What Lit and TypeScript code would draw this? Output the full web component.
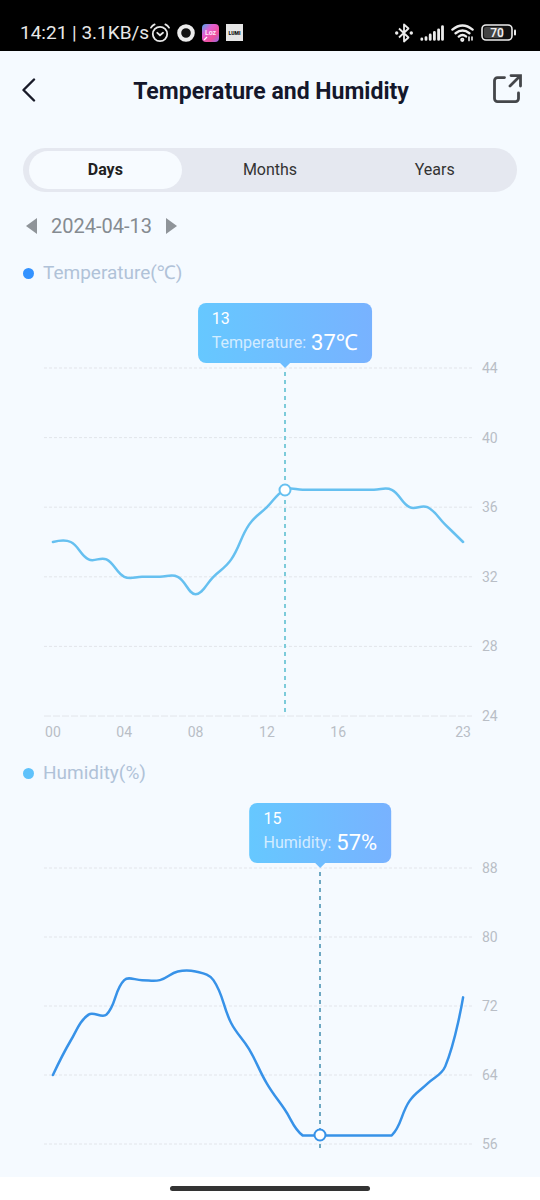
import { LitElement, html, svg, css } from "lit";
import { customElement, property, state } from "lit/decorators.js";
import { classMap } from "lit/directives/class-map.js";

const VIEW_W = 432;
const VIEW_H = 300;
const SLOT = VIEW_W / 24;

interface Pt { x: number; y: number }

/** Smooth cubic path; handles are weighted by segment length and never pass the floor. */
function smoothPath(pts: Pt[], floor: number): string {
  const k = 0.4;
  const cap = (y: number) => Math.min(y, floor);
  const len = (a: Pt, b: Pt) => Math.hypot(b.x - a.x, b.y - a.y);
  let d = `M${pts[0].x} ${pts[0].y}`;
  let out = pts[0];
  for (let i = 1; i < pts.length; i++) {
    const p = pts[i];
    const prev = pts[i - 1];
    const next = pts[i + 1];
    let into = p;
    let nextOut = p;
    if (next) {
      const ratio = len(p, next) / (len(p, next) + len(prev, p));
      const vx = next.x - prev.x;
      const vy = next.y - prev.y;
      into = { x: p.x - vx * k * (1 - ratio), y: cap(p.y - vy * k * (1 - ratio)) };
      nextOut = { x: p.x + vx * k * ratio, y: cap(p.y + vy * k * ratio) };
    }
    d += `C${out.x} ${out.y} ${into.x} ${into.y} ${p.x} ${p.y}`;
    out = nextOut;
  }
  return d;
}

@customElement("day-chart")
export class DayChart extends LitElement {
  @property() name = "";
  @property() unit = "";
  @property({ type: Array }) values: number[] = [];
  @property({ type: Array }) ticks: number[] = [];
  @property({ type: Array }) hours: string[] = [];
  @property({ type: Number }) selected = 0;

  static styles = css`
    :host { display: block; }
    .legend {
      display: flex; align-items: center; gap: 9px; margin: 0;
      font-size: 19px; line-height: 24px; font-weight: 400; color: #b0c2d8;
    }
    .dot { width: 11px; height: 11px; border-radius: 50%; background: var(--dot); }
    .chart {
      display: grid; grid-template-columns: 1fr 35px; column-gap: 10px;
      margin: 83px 0 0 21px;
    }
    .plot { position: relative; height: var(--plot-height); }
    .lines { display: block; width: 100%; height: 100%; overflow: visible; }
    .lines * { vector-effect: non-scaling-stroke; fill: none; }
    .grid { stroke: #e2e5ea; stroke-width: 1; stroke-dasharray: 3 2; }
    .base { stroke-dasharray: 7 2; }
    .curve { stroke: var(--line); stroke-width: 2.5; stroke-linecap: round; stroke-linejoin: round; }
    .guide {
      position: absolute; top: 0; bottom: var(--overhang); width: 2px; transform: translateX(-50%);
      background: repeating-linear-gradient(to bottom, transparent 0 4px, var(--guide) 4px 8px);
    }
    .marker {
      position: absolute; width: 9px; height: 9px; border: 2px solid var(--line);
      border-radius: 50%; background: #fff; transform: translate(-50%, -50%);
    }
    .tip {
      position: absolute; bottom: calc(100% + 5px); transform: translateX(-50%);
      box-sizing: border-box; height: 60px; padding: 5px 14px; border-radius: 8px;
      background: linear-gradient(90deg, #66c8ff, #78b2ff); color: #fff;
      font-size: 16px; line-height: 22px; white-space: nowrap;
    }
    .tip::after {
      content: ""; position: absolute; top: 100%; left: 50%; transform: translateX(-50%);
      border: 5px solid transparent; border-top-color: #6ebdff; border-bottom: 0;
    }
    .hour { display: block; }
    .reading { display: flex; align-items: center; gap: 5px; line-height: 26px; }
    .label { opacity: 0.7; }
    .value { font-size: 22px; }
    .y {
      display: flex; flex-direction: column; justify-content: space-between;
      margin: -8px 0; font-size: 14px; line-height: 16px; color: #b9bec6;
    }
    .x {
      display: grid; grid-template-columns: repeat(24, 1fr); padding-top: 8px;
      font-size: 14px; line-height: 16px; color: #b9bec6;
    }
    .x span { display: flex; justify-content: center; width: 100%; min-width: 0; }
  `;

  render() {
    const top = this.ticks[0];
    const bottom = this.ticks[this.ticks.length - 1];
    const y = (v: number) => ((top - v) / (top - bottom)) * VIEW_H;
    const pts = this.values.map((v, i) => ({ x: (i + 0.5) * SLOT, y: y(v) }));
    const left = ((this.selected + 0.5) / 24) * 100;
    const at = (y(this.values[this.selected]) / VIEW_H) * 100;
    return html`
      <h2 class="legend"><span class="dot"></span>${this.name}(${this.unit})</h2>
      <div class="chart">
        <div class="plot">
          <svg class="lines" viewBox="0 0 ${VIEW_W} ${VIEW_H}" preserveAspectRatio="none" role="img" aria-label=${this.name}>
            ${this.ticks.map((t) => svg`<path class=${t === bottom && this.hours.length ? "grid base" : "grid"} d="M0 ${y(t)}H${VIEW_W}" />`)}
            <path class="curve" d=${smoothPath(pts, y(Math.min(...this.values)))} />
          </svg>
          <div class="guide" style="left:${left}%"></div>
          <div class="marker" style="left:${left}%;top:${at}%"></div>
          <div class="tip" style="left:${left}%">
            <span class="hour">${this.selected}</span>
            <span class="reading"><span class="label">${this.name}:</span><span class="value">${this.values[this.selected]}${this.unit}</span></span>
          </div>
        </div>
        <div class="y">${this.ticks.map((t) => html`<span>${t}</span>`)}</div>
        ${this.hours.length
          ? html`<div class="x">${this.hours.map((t) => html`<span style="grid-column:${Number(t) + 1}">${t}</span>`)}</div>`
          : null}
      </div>
    `;
  }
}

@customElement("app-root")
export class AppRoot extends LitElement {
  @state() private range = "Days";

  static styles = css`
    :host {
      display: flex; flex-direction: column; min-height: 100vh;
      background: #f5faff; font-family: Roboto, "Noto Sans", sans-serif;
    }
    button { font: inherit; border: 0; padding: 0; background: none; color: inherit; cursor: pointer; }
    svg { display: block; }
    .status {
      display: flex; align-items: center; box-sizing: border-box; height: 51px;
      padding: 14px 23px 0 20px; background: #000; color: #e8e8e8; font-size: 19px; line-height: 24px;
    }
    .left, .right { display: flex; align-items: center; }
    .left { gap: 7px; white-space: nowrap; }
    .left .clock { margin-right: -6px; }
    .right { gap: 7px; margin-left: auto; }
    .head {
      display: grid; grid-template-columns: 34px 1fr 34px; align-items: center;
      height: 78px; padding: 0 16px 0 18px;
    }
    .title { margin: 0; padding-top: 3px; text-align: center; font-size: 23px; line-height: 32px; font-weight: 700; color: #14172b; }
    .share { justify-self: end; }
    .body { flex: 1; padding: 19px 23px 0; }
    .tabs {
      display: grid; grid-template-columns: repeat(3, 1fr); height: 44px; box-sizing: border-box;
      padding: 3px 0; border-radius: 22px; background: #e5e8f0;
    }
    .tab { margin: 0 6px; border-radius: 19px; font-size: 16px; line-height: 38px; color: #333; }
    .on { background: #f7fbff; font-weight: 700; color: #222; }
    .date { display: flex; align-items: center; gap: 13px; margin: 22px 0 23px 3px; font-size: 20px; line-height: 24px; color: #858b91; }
    .temp { --dot: #3392ff; --line: #66c0f0; --guide: #7ccbda; --plot-height: 348px; --overhang: 0px; margin-bottom: 21px; }
    .humid { --dot: #5fc2fb; --line: #3792e8; --guide: #6ea8c2; --plot-height: 276px; --overhang: -8px; }
    .nav { display: flex; justify-content: center; align-items: center; height: 23px; background: #fff; }
    .handle { width: 37%; height: 5px; border-radius: 3px; background: #333; }
  `;

  private tab(name: string) {
    const on = this.range === name;
    return html`<button class=${classMap({ tab: true, on })} role="tab" aria-selected=${on} @click=${() => (this.range = name)}>${name}</button>`;
  }

  render() {
    return html`
      <div class="status">
        <div class="left">
          <span class="clock">14:21 | 3.1KB/s</span>
          <svg width="20" height="20" viewBox="0 0 20 20" fill="none" stroke="#e8e8e8" stroke-width="1.8" stroke-linecap="round">
            <circle cx="10" cy="11" r="7.2" /><path d="M7.3 9.8L10 12.2l3-2.4M1 4.6Q2.2 2.4 4.6 1.4M19 4.6Q17.8 2.4 15.4 1.4" />
          </svg>
          <svg width="18" height="18" viewBox="0 0 18 18"><circle cx="9" cy="9" r="6.8" fill="#111" stroke="#ececec" stroke-width="4" /></svg>
          <svg width="17" height="18" viewBox="0 0 17 18">
            <defs><linearGradient id="g" x1="0" y1="0" x2="1" y2="1"><stop offset="0" stop-color="#4aa8ee" /><stop offset=".35" stop-color="#e25fd0" /><stop offset=".7" stop-color="#f0509a" /><stop offset="1" stop-color="#8a6cf0" /></linearGradient></defs>
            <rect width="17" height="18" rx="4" fill="url(#g)" />
            <text x="8.5" y="11" font-size="7" font-weight="700" fill="#ffe4f8" text-anchor="middle">Loz</text>
            <path d="M2 16l3-3" stroke="#fff" stroke-width="1.2" />
          </svg>
          <svg width="17" height="17" viewBox="0 0 17 17">
            <rect width="17" height="17" fill="#e6e6e6" />
            <text x="8.5" y="10.5" font-size="5" font-weight="900" fill="#111" text-anchor="middle">LUMI</text>
          </svg>
        </div>
        <div class="right">
          <svg width="18" height="20" viewBox="0 0 18 20" fill="none" stroke="#ececec" stroke-width="1.8" stroke-linejoin="round">
            <path d="M4 5.5l9.5 9L9 18.5v-17l4.5 4L4 14.5" /><circle cx="1.7" cy="10" r=".8" /><circle cx="16.3" cy="10" r=".8" />
          </svg>
          <svg width="24" height="16" viewBox="0 0 24 16" stroke="#ececec" stroke-width="2.8" stroke-linecap="round">
            <path d="M1.8 14v.4M6 12.6v1.8M10.2 10v4.4M14.4 7.4v7M18.6 4.8v9.6M22.5 1.6v12.8" />
          </svg>
          <svg width="23" height="18" viewBox="0 0 23 18" fill="none" stroke="#ececec" stroke-width="2.4" stroke-linecap="round">
            <path d="M1.4 5.6Q11.5-2.6 21.6 5.6M4.6 9.2Q11.5 3.6 18.4 9.2M7.8 12.6Q11.5 9.6 15 12.4" />
            <circle cx="11.3" cy="15.8" r=".9" /><path d="M18 13v3.6M21 13v3" stroke-width="1.6" />
          </svg>
          <svg width="36" height="17" viewBox="0 0 36 17">
            <rect x="1" y="1" width="30" height="15" rx="4" fill="#111" stroke="#ececec" stroke-width="1.6" />
            <path d="M34 6.5v4" stroke="#ececec" stroke-width="2" stroke-linecap="round" />
            <rect x="3" y="3" width="19" height="11" rx="2" fill="#444" />
            <text x="16" y="12.7" font-size="12" font-weight="600" fill="#eee" text-anchor="middle">70</text>
          </svg>
        </div>
      </div>
      <header class="head">
        <button aria-label="Back">
          <svg width="24" height="24" viewBox="0 0 24 24" fill="none" stroke="#181a28" stroke-width="2.4" stroke-linecap="round" stroke-linejoin="round"><path d="M16 1.5L5.5 12 16 22.5" /></svg>
        </button>
        <h1 class="title">Temperature and Humidity</h1>
        <button class="share" aria-label="Share">
          <svg width="32" height="32" viewBox="0 0 32 32" fill="none" stroke="#44464a" stroke-width="2.8" stroke-linecap="round">
            <path d="M12.5 3.6H5.5a3 3 0 0 0-3 3v18a3 3 0 0 0 3 3h18a3 3 0 0 0 3-3V19M19 1.6h9.5v10.5M28 2L18 12" />
          </svg>
        </button>
      </header>
      <main class="body">
        <div class="tabs" role="tablist">${["Days", "Months", "Years"].map((n) => this.tab(n))}</div>
        <div class="date">
          <button aria-label="Previous day"><svg width="12" height="16" viewBox="0 0 12 16"><path d="M0 8L11 0v16z" fill="#8f9499" /></svg></button>
          <time>2024-04-13</time>
          <button aria-label="Next day"><svg width="12" height="16" viewBox="0 0 12 16"><path d="M12 8L1 0v16z" fill="#8f9499" /></svg></button>
        </div>
        <day-chart class="temp" name="Temperature" unit="℃" selected="13"
          .values=${[34, 34, 33, 33, 32, 32, 32, 32, 31, 32, 33, 35, 36, 37, 37, 37, 37, 37, 37, 37, 36, 36, 35, 34]}
          .ticks=${[44, 40, 36, 32, 28, 24]}
          .hours=${["00", "04", "08", "12", "16", "23"]}></day-chart>
        <day-chart class="humid" name="Humidity" unit="%" selected="15"
          .values=${[64, 68, 71, 71, 75, 75, 75, 76, 76, 75, 70, 67, 63, 60, 57, 57, 57, 57, 57, 57, 61, 63, 65, 73]}
          .ticks=${[88, 80, 72, 64, 56]}></day-chart>
      </main>
      <footer class="nav"><div class="handle"></div></footer>
    `;
  }
}
